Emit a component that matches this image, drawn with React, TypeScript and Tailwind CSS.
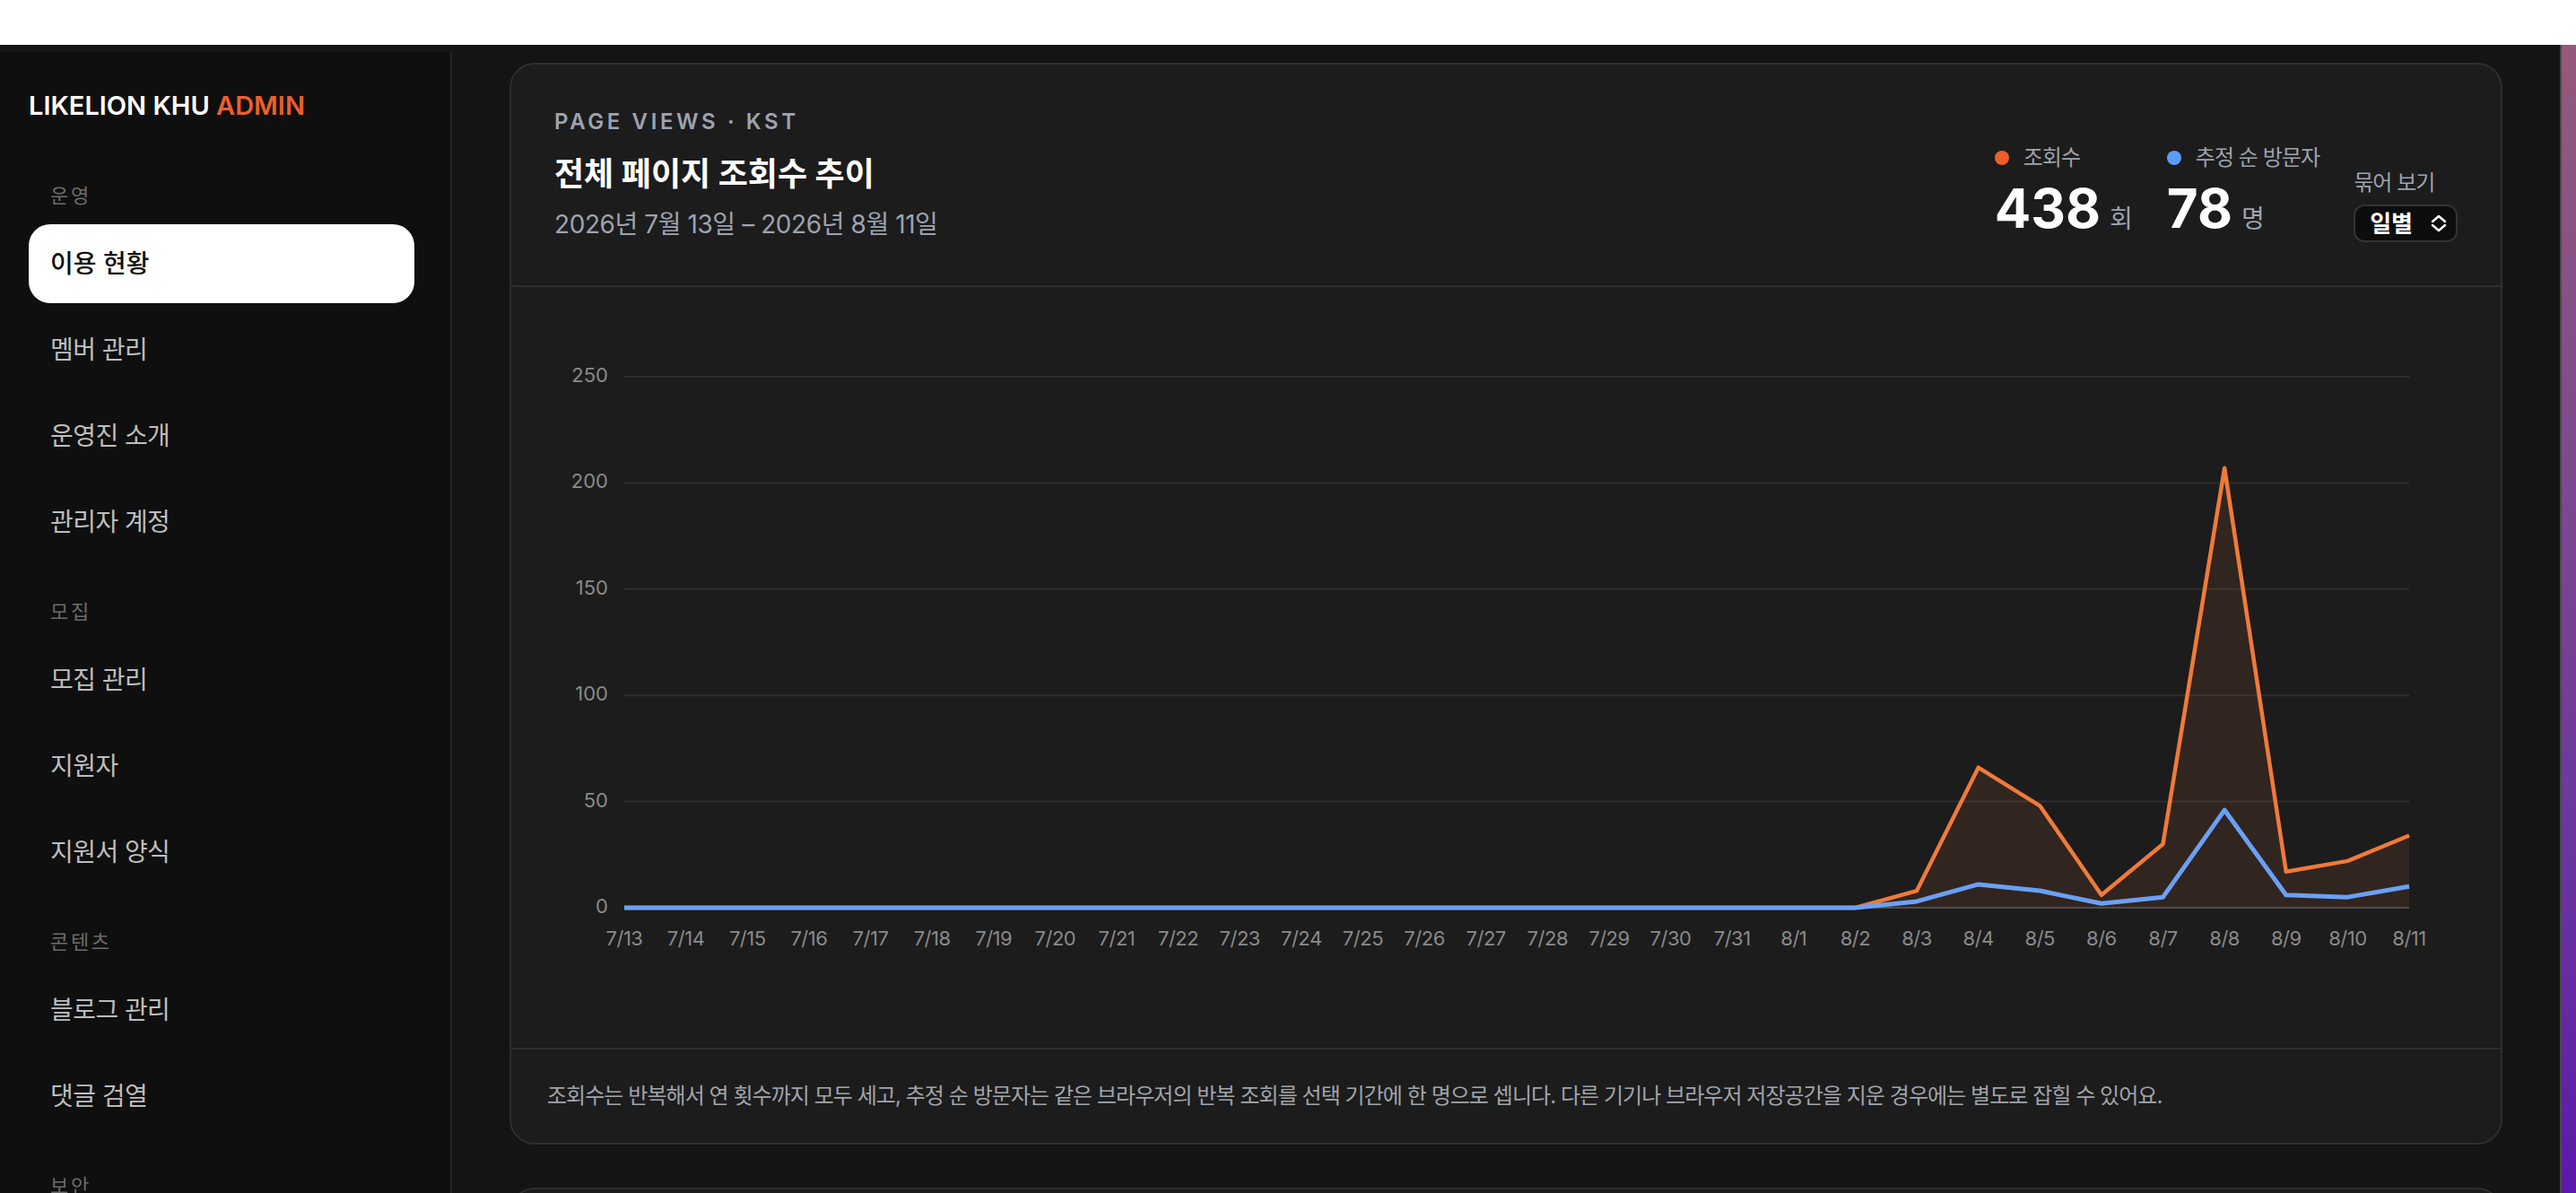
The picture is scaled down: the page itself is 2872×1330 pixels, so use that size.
import { Fragment } from 'react';

const FONT = "font-['Inter','Noto_Sans_CJK_KR',sans-serif]";

const NAV = [
  { title: '운영', items: ['이용 현황', '멤버 관리', '운영진 소개', '관리자 계정'] },
  { title: '모집', items: ['모집 관리', '지원자', '지원서 양식'] },
  { title: '콘텐츠', items: ['블로그 관리', '댓글 검열'] },
  { title: '보안', items: ['접근 로그'] },
];

// 7/13 ~ 8/11, KST 일별
const DAYS = [
  ...Array.from({ length: 19 }, (_, i) => `7/${13 + i}`),
  ...Array.from({ length: 11 }, (_, i) => `8/${1 + i}`),
];
const VIEWS = [...Array(21).fill(0), 8, 66, 48, 6, 30, 207, 17, 22, 34];
const VISITORS = [...Array(21).fill(0), 3, 11, 8, 2, 5, 46, 6, 5, 10];

// chart geometry (px)
const W = 2122;
const H = 848;
const X0 = 78;
const X1 = 2068;
const Y0 = 692;
const PER = 2.368;
const xAt = (i: number) => X0 + ((X1 - X0) / (DAYS.length - 1)) * i;
const yAt = (v: number) => Y0 - v * PER;

function Sidebar() {
  return (
    <aside className="w-[504px] shrink-0 border-r-2 border-[#262626] bg-[#0f0f0f] pl-[32px] pr-[40px] pt-[42px]">
      <div className="text-[29px] leading-[36px] font-semibold text-white">
        LIKELION KHU <span className="text-[#ec5f2a]">ADMIN</span>
      </div>
      <nav className="mt-[66px] flex flex-col gap-[40px]">
        {NAV.map((section) => (
          <div key={section.title}>
            <div className="px-[24px] text-[22px] leading-[32px] tracking-[0.12em] text-[#6b6b6b]">{section.title}</div>
            <div className="mt-[16px] flex flex-col gap-[8px]">
              {section.items.map((item) => (
                <div
                  key={item}
                  className={
                    item === '이용 현황'
                      ? 'flex h-[88px] items-center rounded-[24px] bg-white px-[24px] text-[28px] font-medium text-[#111111]'
                      : 'flex h-[88px] items-center rounded-[24px] px-[24px] text-[28px] tracking-[-0.02em] text-[#bdbdbd]'
                  }
                >
                  {item}
                </div>
              ))}
            </div>
          </div>
        ))}
      </nav>
    </aside>
  );
}

function Stat({ dot, label, value, unit }: { dot: string; label: string; value: string; unit: string }) {
  return (
    <div className="flex flex-col pb-[8px]">
      <div className="flex items-center gap-[16px] text-[24px] leading-[32px] tracking-[-0.04em] text-[#9ca3af]">
        <span className={`h-[16px] w-[16px] rounded-full ${dot}`} />
        {label}
      </div>
      <div className="mt-[10px] flex items-baseline gap-[10px]">
        <span className="text-[60px] leading-none font-bold text-white">{value}</span>
        <span className="text-[28px] leading-none text-[#9ca3af]">{unit}</span>
      </div>
    </div>
  );
}

function Chart() {
  const viewPts = VIEWS.map((v, i) => `${xAt(i)},${yAt(v)}`).join(' ');
  const visitorPts = VISITORS.map((v, i) => `${xAt(i)},${yAt(v)}`).join(' ');
  const area = `${X0},${Y0} ${viewPts} ${X1},${Y0}`;

  return (
    <svg width={W} height={H} viewBox={`0 0 ${W} ${H}`} className="block">
      {[0, 50, 100, 150, 200, 250].map((t) => (
        <Fragment key={t}>
          <line x1={X0} x2={X1} y1={yAt(t)} y2={yAt(t)} stroke={t === 0 ? '#4a4a4a' : '#2e2e2e'} strokeWidth={2} />
          <text x={60} y={yAt(t)} textAnchor="end" dominantBaseline="middle" fontSize={22} fill="#8a8a8a" fontFamily="Inter, sans-serif">
            {t}
          </text>
        </Fragment>
      ))}
      {DAYS.map((d, i) => (
        <text key={d} x={xAt(i)} y={728} textAnchor="middle" dominantBaseline="middle" fontSize={22} fill="#8a8a8a" fontFamily="Inter, sans-serif" letterSpacing={-0.5}>
          {d}
        </text>
      ))}
      <polygon points={area} fill="#f07a3a" fillOpacity={0.1} />
      <polyline points={viewPts} fill="none" stroke="#f07a3a" strokeWidth={4.5} strokeLinejoin="round" />
      <polyline points={visitorPts} fill="none" stroke="#6aa0f5" strokeWidth={5} strokeLinejoin="round" />
    </svg>
  );
}

function ViewsCard() {
  return (
    <section className="rounded-[28px] border-2 border-[#2e2e2e] bg-[#1c1c1c]">
      <header className="flex items-end justify-between border-b-2 border-[#2e2e2e] p-[48px]">
        <div>
          <div className="text-[24px] leading-[32px] font-semibold tracking-[0.15em] text-[#9ca3af]">PAGE VIEWS · KST</div>
          <h1 className="mt-[18px] text-[36px] leading-[48px] font-bold text-white">전체 페이지 조회수 추이</h1>
          <p className="mt-[12px] text-[28px] leading-[40px] tracking-[-0.015em] text-[#9ca3af]">2026년 7월 13일 – 2026년 8월 11일</p>
        </div>
        <div className="flex items-end gap-[38px]">
          <Stat dot="bg-[#ec5f2a]" label="조회수" value="438" unit="회" />
          <Stat dot="bg-[#5b9cf6]" label="추정 순 방문자" value="78" unit="명" />
          <div className="flex flex-col">
            <span className="text-[24px] leading-[32px] tracking-[-0.04em] text-[#9ca3af]">묶어 보기</span>
            <button className="mt-[8px] flex h-[42px] items-center gap-[20px] rounded-[12px] border-2 border-[#333333] bg-[#0d0d0d] pl-[16px] pr-[10px] text-[26px] font-semibold text-white">
              일별
              <svg width="18" height="22" viewBox="0 0 18 22" fill="none" stroke="white" strokeWidth="2.5" strokeLinecap="round" strokeLinejoin="round">
                <path d="M2 9 L9 3 L16 9" />
                <path d="M2 13 L9 19 L16 13" />
              </svg>
            </button>
          </div>
        </div>
      </header>
      <div className="px-[48px]">
        <Chart />
      </div>
      <footer className="border-t-2 border-[#2e2e2e] px-[40px] py-[36px] text-[24px] leading-[32px] tracking-[-0.04em] text-[#a0a4ab]">
        조회수는 반복해서 연 횟수까지 모두 세고, 추정 순 방문자는 같은 브라우저의 반복 조회를 선택 기간에 한 명으로 셉니다. 다른 기기나 브라우저 저장공간을 지운 경우에는 별도로 잡힐 수 있어요.
      </footer>
    </section>
  );
}

export default function App() {
  return (
    <div className={`flex h-screen w-full flex-col overflow-hidden bg-white ${FONT}`}>
      <div className="h-[50px] shrink-0 bg-white" />
      <div className="flex min-h-0 flex-1 bg-[#141414]">
        <div className="flex min-w-0 flex-1 pt-[8px]">
          <Sidebar />
          <main className="flex min-w-0 flex-1 flex-col gap-[48px] px-[64px] pt-[12px]">
            <ViewsCard />
            <section className="h-[600px] shrink-0 rounded-[28px] border-2 border-[#2e2e2e] bg-[#1c1c1c]" />
          </main>
        </div>
        <div className="w-[2px] shrink-0 bg-[#4a4a4a]" />
        <div className="w-[16px] shrink-0 bg-linear-to-b from-[#955a7a] to-[#5c17aa]" />
      </div>
    </div>
  );
}
